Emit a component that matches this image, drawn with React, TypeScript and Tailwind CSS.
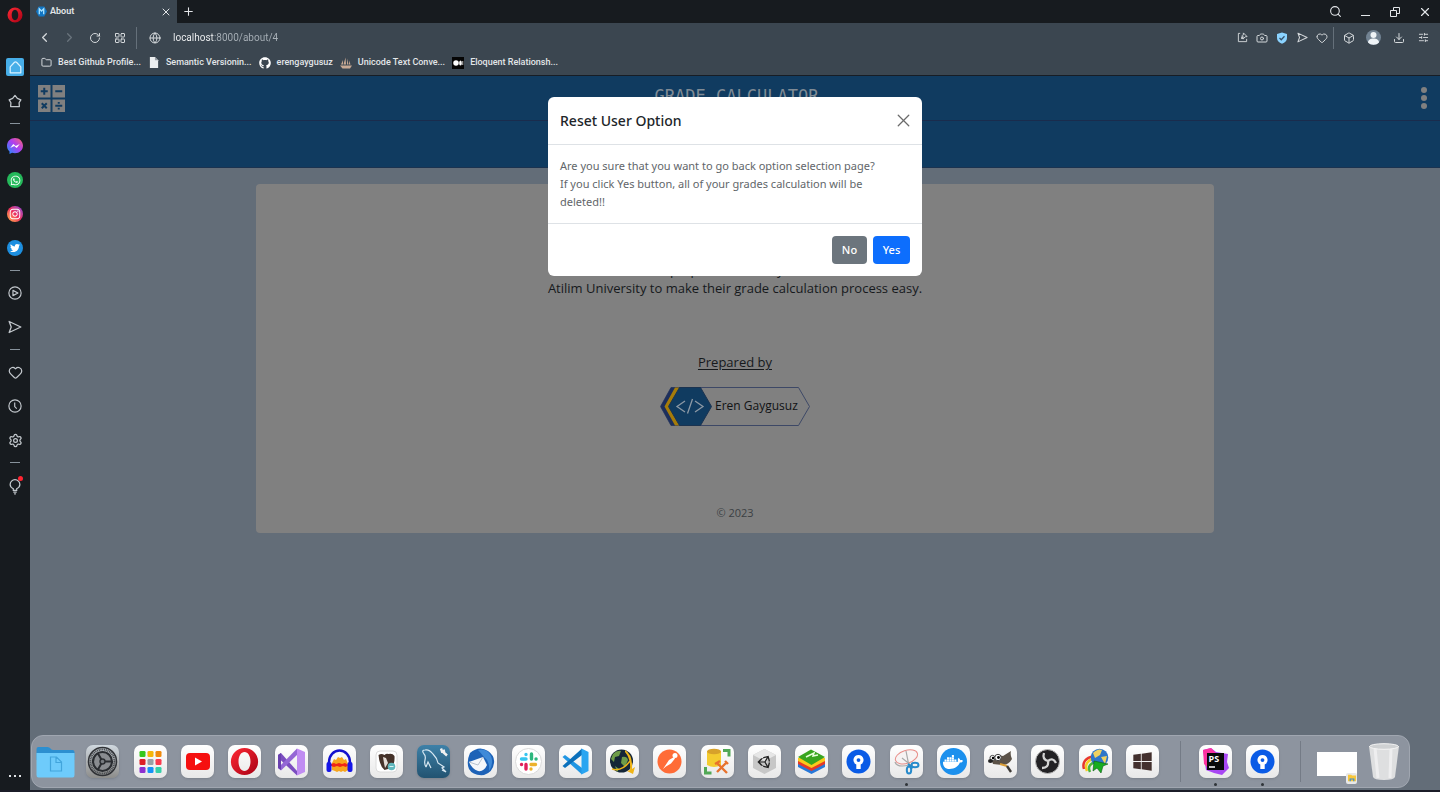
import React from "react";
import {
  Box, Camera, ChevronLeft, ChevronRight, Download, Folder, Globe, Heart,
  LayoutGrid, Plus, RotateCw, Search, Settings, SlidersHorizontal, X,
} from "lucide-react";
import {
  FaDocker, FaGithub, FaInstagram, FaTwitter, FaUnity, FaWhatsapp, FaWindows,
} from "react-icons/fa";

type Kids = { children?: React.ReactNode };

function SideItem({ label, children }: Kids & { label: string }) {
  return (
    <button aria-label={label} className="flex h-[34px] w-full items-center justify-center text-[#c3c8cd]">
      {children}
    </button>
  );
}

function SideDash() {
  return (
    <div className="flex h-[11px] items-center">
      <span className="h-px w-[10px] bg-[#87929b]" />
    </div>
  );
}

function OperaRing({ className }: { className: string }) {
  return (
    <svg viewBox="0 0 32 32" className={className} aria-hidden="true">
      <defs>
        <linearGradient id="ring" x1="0" x2="1" y1="0" y2="1">
          <stop offset="0" stopColor="#ff2a35" />
          <stop offset="1" stopColor="#a70014" />
        </linearGradient>
      </defs>
      <path fill="url(#ring)" fillRule="evenodd" d="M16 1a15 15 0 1 0 0 30a15 15 0 0 0 0-30Zm0 4.500c4 0 6.600 4.700 6.600 10.500S20 26.500 16 26.500S9.400 21.800 9.400 16S12 5.500 16 5.500Z" />
    </svg>
  );
}

function SendOutline({ className }: { className: string }) {
  return (
    <svg viewBox="0 0 24 24" className={className} fill="none" stroke="currentColor" strokeWidth="2.200" strokeLinejoin="round" aria-hidden="true">
      <path d="M2 2.500 22 12 2 21.500 5.500 12Z" />
    </svg>
  );
}

function Sidebar() {
  return (
    <nav aria-label="Browser sidebar" className="flex w-[30px] shrink-0 flex-col items-center bg-[#171b1f]">
      <div className="flex h-[50px] items-start pt-[7px]">
        <OperaRing className="size-4" />
      </div>
      <SideItem label="Home">
        <span className="flex size-[18px] items-center justify-center rounded-xs bg-[#47aee8]">
          <svg viewBox="0 0 24 24" className="size-[15px]" fill="none" stroke="#d9f2ff" strokeWidth="2" strokeLinejoin="round">
            <path d="M3.500 11 10 4q2-1.800 4 0l6.500 7v9.500h-17Z" />
          </svg>
        </span>
      </SideItem>
      <SideItem label="Pinboards">
        <svg viewBox="0 0 24 24" className="size-[14px]" fill="none" stroke="currentColor" strokeWidth="2.200" strokeLinejoin="round">
          <path d="m12 2.500 4 5 6 2.500-3 5 .5 6.500H4.500L5 15l-3-5 6-2.500Z" />
        </svg>
      </SideItem>
      <SideDash />
      <SideItem label="Messenger">
        <svg viewBox="0 0 32 32" className="size-4">
          <defs>
            <linearGradient id="msg" x1="1" x2="0" y1="0" y2="1">
              <stop offset="0" stopColor="#ff6a66" />
              <stop offset=".45" stopColor="#b13df0" />
              <stop offset="1" stopColor="#1296ff" />
            </linearGradient>
          </defs>
          <path fill="url(#msg)" d="M16 0C7 0 0 6.500 0 15.500c0 4.500 1.800 8.500 5 11.300V32l5-2.300c2 .6 4 .8 6 .8 9 0 16-6.500 16-15S25 0 16 0Z" />
          <path d="m6.500 20 6-8 5 4.200 8-4.200-6 8-5-4.200Z" fill="#fff" />
        </svg>
      </SideItem>
      <SideItem label="WhatsApp">
        <span className="flex size-4 items-center justify-center rounded-full bg-[#25b95b]">
          <FaWhatsapp className="size-[11px] text-white" />
        </span>
      </SideItem>
      <SideItem label="Instagram">
        <span className="flex size-4 items-center justify-center rounded-full bg-linear-to-tr from-[#ffb13b] via-[#ee2a5d] to-[#8a35e0]">
          <FaInstagram className="size-[12px] text-white" />
        </span>
      </SideItem>
      <SideItem label="Twitter">
        <span className="flex size-4 items-center justify-center rounded-full bg-[#1d8fe0]">
          <FaTwitter className="size-[10px] text-white" />
        </span>
      </SideItem>
      <SideDash />
      <SideItem label="Player">
        <svg viewBox="0 0 24 24" className="size-[14px]" fill="none" stroke="currentColor" strokeWidth="2" strokeLinejoin="round">
          <circle cx="12" cy="12" r="10.500" />
          <path d="M8.500 7.500 17 12l-8.500 4.500Z" />
        </svg>
      </SideItem>
      <SideItem label="My Flow">
        <SendOutline className="size-[14px]" />
      </SideItem>
      <SideDash />
      <SideItem label="Bookmarks"><Heart className="size-[15px]" strokeWidth={2} /></SideItem>
      <SideItem label="History">
        <svg viewBox="0 0 24 24" className="size-[14px]" fill="none" stroke="currentColor" strokeWidth="2">
          <circle cx="12" cy="12" r="10.500" />
          <path d="M11.500 6v7l3.500 3.500" />
        </svg>
      </SideItem>
      <SideItem label="Settings"><Settings className="size-[15px]" strokeWidth={2} /></SideItem>
      <SideDash />
      <SideItem label="Tips">
        <span className="relative pt-[3px]">
          <svg viewBox="0 0 24 28" className="h-4 w-[14px]" fill="none" stroke="currentColor" strokeWidth="2.200">
            <path d="M9 20v-3C5.500 15.500 3.500 13 3.500 9.800a8.500 8.500 0 0 1 17 0c0 3.200-2 5.700-5.500 7.200v3Z" />
            <path d="M9 23h6M10.500 26h3" />
          </svg>
          <span className="absolute top-0 -right-px size-[5px] rounded-full bg-[#ff2431]" />
        </span>
      </SideItem>
      <button aria-label="Sidebar setup" className="mt-auto mb-[12px] flex gap-[3px] py-px">
        <i className="size-[2px] bg-[#dfe2e5]" />
        <i className="size-[2px] bg-[#dfe2e5]" />
        <i className="size-[2px] bg-[#dfe2e5]" />
      </button>
    </nav>
  );
}

function TabStrip() {
  return (
    <div className="flex h-[23px] items-center bg-[#171b1f] text-[#e3e6e9]">
      <div className="flex h-full w-[147px] items-center bg-[#3b4650] pr-[5px] pl-[6px]">
        <svg viewBox="0 0 20 20" className="size-[11px]" aria-hidden="true">
          <path d="M5 1h10l5 9-5 9H5L0 10Z" fill="#1276c4" />
          <path d="M6 15V5l4 4 4-4v10" stroke="#a8e2ff" strokeWidth="2.400" fill="none" />
        </svg>
        <span className="ml-[3px] font-['Roboto',sans-serif] text-[9px] font-semibold">About</span>
        <button aria-label="Close tab" className="ml-auto"><X className="size-[12px]" /></button>
      </div>
      <button aria-label="New tab" className="ml-[5px]"><Plus className="size-[13px]" strokeWidth={2} /></button>
      <div className="ml-auto flex items-center">
        <button aria-label="Search tabs" className="flex w-[30px] justify-center"><Search className="size-[13px]" /></button>
        <button aria-label="Minimize" className="flex w-[30px] justify-center pt-[8px]"><span className="h-px w-[9px] bg-current" /></button>
        <button aria-label="Restore" className="flex w-[30px] justify-center">
          <svg viewBox="0 0 10 10" className="size-[10px]" fill="none" stroke="currentColor"><path d="M.5 3.500h6v6h-6ZM3.500 3.500v-3h6v6h-3" /></svg>
        </button>
        <button aria-label="Close window" className="flex w-[30px] justify-center"><X className="size-[14px]" /></button>
      </div>
    </div>
  );
}

function Tool({ label, wide, children }: Kids & { label: string; wide?: boolean }) {
  return (
    <button aria-label={label} className={wide ? "flex w-[25px] justify-center" : "flex w-[20px] justify-center"}>
      {children}
    </button>
  );
}

function Toolbar() {
  return (
    <div className="flex h-[28px] items-center bg-[#3b4650] pt-px pr-[4px] pl-[2px] text-[#d5d9dc]">
      <Tool label="Back" wide><ChevronLeft className="size-[15px]" /></Tool>
      <Tool label="Forward" wide><ChevronRight className="size-[15px] text-[#6a747d]" /></Tool>
      <Tool label="Reload" wide><RotateCw className="size-[12px]" /></Tool>
      <Tool label="Speed dial" wide><LayoutGrid className="size-[12px]" /></Tool>
      <span className="ml-[4px] h-[22px] w-px bg-[#65707a]" />
      <Globe className="ml-[12px] size-[12px]" />
      <input
        aria-label="Address"
        defaultValue="localhost:8000/about/4"
        className="ml-[12px] min-w-0 flex-1 bg-[linear-gradient(to_right,#f5f6f7_41px,#a9b1b8_41px)] bg-clip-text font-['Roboto',sans-serif] text-[10px] text-transparent outline-none"
      />
      <Tool label="Easy share">
        <svg viewBox="0 0 24 24" className="size-[11px]" fill="none" stroke="currentColor" strokeWidth="2"><path d="M7 3H3v18h18v-6M9 15l4-4M11 8l5 5M14 2l8 8-4 .5-5 5L9.500 11l4-4Z" /></svg>
      </Tool>
      <Tool label="Snapshot"><Camera className="size-[12px]" /></Tool>
      <Tool label="Protection">
        <svg viewBox="0 0 24 24" className="size-[12px]"><path d="m12 1 10 3v8c0 6-4 9-10 11.500C6 21 2 18 2 12V4Z" fill="#8bd3ff" /><path d="m7 12 3.500 3.500L17 8.500" fill="none" stroke="#35516a" strokeWidth="2.500" /></svg>
      </Tool>
      <Tool label="Send to flow"><SendOutline className="size-[11px]" /></Tool>
      <Tool label="Favorite"><Heart className="size-[12px]" /></Tool>
      <span className="mr-[2px] ml-px h-[22px] w-px bg-[#65707a]" />
      <Tool label="Extensions" wide><Box className="size-[12px]" /></Tool>
      <Tool label="Profile" wide>
        <svg viewBox="0 0 30 30" className="size-[15px]"><circle cx="15" cy="15" r="15" fill="#718292" /><circle cx="15" cy="10" r="6" fill="#eef3f7" /><path d="M4 25c0-5 5-8 11-8s11 3 11 8c-6 6-16 6-22 0Z" fill="#eef3f7" /></svg>
      </Tool>
      <Tool label="Downloads" wide><Download className="size-[12px]" /></Tool>
      <Tool label="Easy setup" wide><SlidersHorizontal className="size-[11px]" /></Tool>
    </div>
  );
}

function Bookmark({ text, children }: Kids & { text: string }) {
  return (
    <a href="#" className="flex items-center gap-[6px]">
      <span className="flex w-[12px] justify-center">{children}</span>
      {text}
    </a>
  );
}

function BookmarksBar() {
  return (
    <div className="flex h-[25px] items-center gap-[7px] border-b border-[#171d25] bg-[#3b4650] pb-px pl-[10px] font-['Roboto',sans-serif] text-[9px] font-medium whitespace-nowrap text-[#e3e6e9]">
      <Bookmark text="Best Github Profile..."><Folder className="size-[11px]" /></Bookmark>
      <Bookmark text="Semantic Versionin...">
        <svg viewBox="0 0 20 24" className="h-[11px] w-[10px]"><path d="M1 0h11l7 7v17H1Z" fill="#eceef0" /><path d="M12 0v7h7" fill="#9ba2a9" /></svg>
      </Bookmark>
      <Bookmark text="erengaygusuz"><FaGithub className="size-[12px] text-white" /></Bookmark>
      <Bookmark text="Unicode Text Conve...">
        <svg viewBox="0 0 24 24" className="size-[12px]"><path d="M11 1 7 15h5ZM6 6 2 15h4ZM14 3v12h3ZM18 7v8h3ZM0 17h24l-4 6H5Z" fill="#c7a994" /></svg>
      </Bookmark>
      <Bookmark text="Eloquent Relationsh...">
        <svg viewBox="0 0 24 24" className="size-[12px]"><path fill="#050505" d="M0 0h24v24H0Z" /><circle cx="8" cy="12" r="5.500" fill="#fff" /><ellipse cx="17" cy="12" rx="2.700" ry="5" fill="#fff" /><path d="M21.500 8v8" stroke="#fff" strokeWidth="1.500" /></svg>
      </Bookmark>
    </div>
  );
}

function SiteHeader() {
  return (
    <header className="border-b border-[#1b3350] bg-[#103b60]">
      <div className="flex h-[45px] items-center border-b border-[#1a2c4d] pr-[13px] pl-[8px]">
        <svg viewBox="0 0 27 27" className="size-[27px]" role="img" aria-label="Calculator">
          <path d="M0 0h12.500v12.500H0ZM14.500 0H27v12.500H14.500ZM0 14.500h12.500V27H0ZM14.500 14.500H27V27H14.500Z" fill="#808080" />
          <path d="M6.250 2.750v7M2.750 6.250h7M17.250 6.250h7M3.750 18.250l5 5M8.750 18.250l-5 5M17.250 20.750h7M20.750 17v1.800M20.750 22.700v1.800" stroke="#103b60" strokeWidth="2" fill="none" />
        </svg>
        <h1 className="flex-1 pr-[13px] pb-[4px] text-center font-['DejaVu_Sans_Mono',monospace] text-[17px] leading-6 text-[#808b95]">GRADE CALCULATOR</h1>
        <button aria-label="Menu" className="flex flex-col gap-[2px]">
          <span className="size-[6px] rounded-full bg-[#808080]" />
          <span className="size-[6px] rounded-full bg-[#808080]" />
          <span className="size-[6px] rounded-full bg-[#808080]" />
        </button>
      </div>
      <div className="h-[46px]" />
    </header>
  );
}

function AuthorBadge() {
  return (
    <a href="#" className="relative mt-[15px] flex h-[39px] w-[150px] items-center pl-[55px] text-[12px] font-normal text-[#111315]">
      <svg viewBox="0 0 150 39" className="absolute inset-0 size-full" aria-hidden="true">
        <path d="M11 .5h127.500L149.500 19.500 138.500 38.500H11L.5 19.500Z" fill="none" stroke="#3d4866" />
        <path d="M11 .5h8L8 19.500l11 19h-8L.5 19.500Z" fill="#1d2f5c" />
        <path d="M15 .5h5L9 19.500l11 19h-5L4.500 19.500Z" fill="#a57c0a" />
        <path d="M19.500.5h21l11 19-11 19h-21l-11-19Z" fill="#103b60" stroke="#1b3350" />
        <path d="m25 14-8 5.500 8 5.500M35 14l8 5.500-8 5.500M32.500 12l-5 14.500" fill="none" stroke="#8d99a5" strokeWidth="1.300" />
      </svg>
      <span className="relative pb-[2px]">Eren Gaygusuz</span>
    </a>
  );
}

function AboutCard() {
  return (
    <main className="mx-auto mt-[16px] flex h-[349px] w-[68%] flex-col items-center rounded bg-[#808080] pt-[77px] text-[13px] font-medium text-[#16191c]">
      <p className="text-center leading-[18px]">
        This website is prepared for every student who is at
        <br />
        Atilim University to make their grade calculation process easy.
      </p>
      <h2 className="mt-[55px] leading-[20px] underline underline-offset-2">Prepared by</h2>
      <AuthorBadge />
      <footer className="mt-auto mb-[11px] text-[11px] leading-[18px] font-normal text-[#3c4044]">© 2023</footer>
    </main>
  );
}

function ResetDialog() {
  return (
    <div className="absolute inset-x-0 top-[21px] flex justify-center">
      <section role="dialog" aria-labelledby="reset-title" className="w-[374px] rounded-md bg-white font-['Noto_Sans',sans-serif]">
        <div className="flex h-[48px] items-center justify-between border-b border-[#dee2e6] px-[12px]">
          <h2 id="reset-title" className="text-[14px] font-medium text-[#212529]">Reset User Option</h2>
          <button aria-label="Close" className="text-[#6b6b6b]"><X className="-mr-[4px] size-[21px]" strokeWidth={1.500} /></button>
        </div>
        <p className="border-b border-[#dee2e6] px-[12px] py-[12px] text-[11px] leading-[18px] text-[#62666a]">
          Are you sure that you want to go back option selection page?
          <br />
          If you click Yes button, all of your grades calculation will be deleted!!
        </p>
        <div className="flex justify-end gap-[6px] p-[12px] text-[11px] font-medium text-white">
          <button className="h-[28px] w-[35px] rounded bg-[#6c757d]">No</button>
          <button className="h-[28px] w-[37px] rounded bg-[#0d6efd]">Yes</button>
        </div>
      </section>
    </div>
  );
}

function App33({ name, running, tone, children }: Kids & { name: string; running?: boolean; tone?: string }) {
  return (
    <button
      aria-label={name}
      className={`relative flex size-[33px] shrink-0 items-center justify-center rounded-[7px] shadow-sm ${tone ?? "bg-linear-to-b from-white to-[#e8e8e8]"}`}
    >
      {children}
      {running && <span className="absolute -bottom-[8px] left-[15px] size-[3px] rounded-full bg-[#2f3439]" />}
    </button>
  );
}

function Art({ children }: Kids) {
  return <svg viewBox="0 0 33 33" className="size-[33px]" aria-hidden="true">{children}</svg>;
}

function SourceTree() {
  return (
    <Art>
      <circle cx="16.500" cy="16.500" r="12" fill="#0a5be6" />
      <path d="M16.500 10a5 5 0 0 0-2.200 9.500V24h4.400v-4.500A5 5 0 0 0 16.500 10Zm0 3.200a1.900 1.900 0 1 1 0 3.800 1.900 1.900 0 0 1 0-3.800Z" fill="#fff" fillRule="evenodd" />
    </Art>
  );
}

const launchTiles = ["#36c71c", "#f5b60b", "#f08a0c", "#dd1f26", "#9aa0a6", "#fb3b4e", "#8c2fd0", "#1692f6", "#36cfa8"];

function Dock() {
  return (
    <div className="absolute right-[30px] bottom-[2px] left-px flex h-[53px] items-center rounded-[12px] border border-[#a0a6b0] bg-[#8d949f] pr-[10px] pl-[7px]">
      <div className="flex flex-1 justify-between">
        <button aria-label="Files" className="flex size-[33px] items-center justify-center">
          <svg viewBox="0 0 38 33" className="h-[33px] w-[39px] shrink-0">
            <path d="M0 4q0-2 2-2h9q2 0 3 1.500T17 5h19q2 0 2 2v8H0Z" fill="#2c8fd0" />
            <path d="M0 8h38v22q0 2.500-2 2.500H2q-2 0-2-2.500Z" fill="#6ecbfb" />
            <path d="M14 12h6l5 5v9H14ZM19.500 12v5.500H25" fill="none" stroke="#42a5dc" strokeWidth="1.200" />
          </svg>
        </button>
        <App33 name="System settings" tone="bg-linear-to-b from-[#d0d8df] to-[#8d8d8b]">
          <Art>
            <circle cx="16.500" cy="16.500" r="14" fill="none" stroke="#303236" strokeWidth="1.500" />
            <circle cx="16.500" cy="16.500" r="12" fill="none" stroke="#4b4e52" strokeWidth="2" strokeDasharray="1.200 .6" />
            <circle cx="16.500" cy="16.500" r="9.500" fill="#898c90" stroke="#2a2d31" strokeWidth="2.200" />
            <path d="M16.500 16.500 12 8.500M16.500 16.500h9.500M16.500 16.500 12 24.500" stroke="#2a2d31" strokeWidth="2" />
            <circle cx="16.500" cy="16.500" r="2.500" fill="#777b80" stroke="#2a2d31" strokeWidth="1.400" />
          </Art>
        </App33>
        <App33 name="Launchpad">
          <Art>{launchTiles.map((c, i) => <rect key={c} x={5.5 + (i % 3) * 8} y={6 + Math.floor(i / 3) * 8} width="6" height="6" rx="1.300" fill={c} />)}</Art>
        </App33>
        <App33 name="YouTube">
          <Art><rect x="5" y="8" width="24" height="17" rx="4" fill="#f50f0f" /><path d="m14 12.500 7 4-7 4Z" fill="#fff" /></Art>
        </App33>
        <App33 name="Opera"><OperaRing className="size-[29px]" /></App33>
        <App33 name="Visual Studio">
          <Art>
            <path d="m22 3.500 8 3.500v20l-8 3.500Z" fill="#c08cf2" />
            <path d="M3 10 6 8l16 18v4.500L4 13.500Z" fill="#7b4dc0" />
            <path d="M3 23 22 3.500V10L6 25.500Z" fill="#9467d5" />
            <path d="M3 10v13l3 2V8Z" fill="#6840ae" />
          </Art>
        </App33>
        <App33 name="Audacity">
          <Art>
            <path d="m9 18 2-4 2 1 2-3 2 1 2-1 2 3 2-1 2 5v6l-3 2-2-1-2 1-2-1-2 1-2-1-3-1Z" fill="#f7a51d" />
            <path d="m8 19 3-1 2 1 3-1 3 1 3-1 3 2-2 2-3-1-3 1-3-1-3 1-3-1Z" fill="#f02517" />
            <path d="M6 20v-3a10.500 11.500 0 0 1 21 0v3" fill="none" stroke="#1310ce" strokeWidth="2.400" />
            <rect x="3.500" y="17" width="5" height="10" rx="2" fill="#1515e8" /><rect x="24.500" y="17" width="5" height="10" rx="2" fill="#1515e8" />
          </Art>
        </App33>
        <App33 name="DBeaver">
          <Art>
            <rect x="6" y="6" width="21" height="21" rx="4" fill="#fff" stroke="#dcdcdc" />
            <path d="M8.500 10q3-2 6 0 2-2 4-1 4-1 6 2 .5 8-3 12l-7 2q-5-4-6-15Z" fill="#453229" /><path d="m13 12 3 1 2 5-3 5-1-5Z" fill="#e4dcd5" />
            <circle cx="21.500" cy="21.500" r="3.800" fill="#60b7bd" /><path d="M19.500 21.500h4" stroke="#d9f3f4" />
          </Art>
        </App33>
        <App33 name="MySQL Workbench" tone="bg-linear-to-b from-[#3e81a8] to-[#225371]">
          <Art>
            <path d="M9 22q-2-3-1-7t-1-6q-3-4 1-4 4-1 8 4 4 4 5 9l6 4-2 1 4 4-4-2M9 22l2-5 3 6" fill="none" stroke="#d8e8f2" strokeWidth="1.200" />
            <path d="m24 3.500 1 3 3-1M25 6l5 4.500" fill="none" stroke="#f0f0f0" strokeWidth="2.400" />
          </Art>
        </App33>
        <App33 name="Thunderbird">
          <Art>
            <path d="M6 8Q15 0 24 6q7 5 6 12-1 9-10 12Q9 31 5 24 2 17 6 8Z" fill="#1d62b7" />
            <path d="M14 5q9-2 13 6 3 8-2 15 1-10-5-14-3-4-6-7Z" fill="#3f8ad8" />
            <path d="m5 17 14-5 4 8q-3 7-9 6-6-2-9-9Z" fill="#f5f7fa" /><path d="m5 17 9 3 5-8" fill="none" stroke="#b8c2ce" />
          </Art>
        </App33>
        <App33 name="Slack">
          <Art>
            <circle cx="16.500" cy="16.500" r="13" fill="#fff" stroke="#dadada" />
            <g strokeWidth="3.400" strokeLinecap="round">
              <path d="M14 9.500v.1M9.500 14H14" stroke="#36c5f0" /><path d="M19.500 9v5M24 14h.1" stroke="#2eb67d" />
              <path d="M19 24v.1M19 19.500h4.500" stroke="#ecb22e" /><path d="M9.500 19.500h.1M14 19.500v4.500" stroke="#e01e5a" />
            </g>
          </Art>
        </App33>
        <App33 name="Visual Studio Code">
          <Art>
            <path d="M3.500 12 6 10l17 13v6.500Z" fill="#2196e3" /><path d="M3.500 21 23 3.500V10L6 23Z" fill="#0b70bb" />
            <path d="m22.500 3.500 7 3.500v19l-7 3.500Z" fill="#2aa5f1" />
          </Art>
        </App33>
        <App33 name="Internet browser">
          <Art>
            <circle cx="15.500" cy="16" r="11.500" fill="#152637" /><path d="M7 9q4-4 8-3l-2 5-4 1-1 5-3-3ZM16 12q5-1 6 3l-3 7-4-4ZM9 21l4 3-2 3Z" fill="#6e9c49" />
            <path d="M19 5q8 5 7 19l3-2-2 7-6-3 3-1q1-11-5-18Z" fill="#f0b415" /><path d="M6 24q10 3 18-8" fill="none" stroke="#eeb31a" strokeWidth="1.500" />
          </Art>
        </App33>
        <App33 name="Postman">
          <Art>
            <circle cx="16.500" cy="16.500" r="12" fill="#ff6c37" />
            <path d="m10 24 6-9 5-3 1 1.500-4 5-5 3Z" fill="#fff" /><circle cx="22" cy="10.500" r="2.500" fill="#fff" />
          </Art>
        </App33>
        <App33 name="Database tools">
          <Art>
            <path d="M22 5.500h6v6M4.500 22v6h6" fill="none" stroke="#51a856" strokeWidth="3" />
            <path d="M6 6v14q7 4 14 0V6Z" fill="#f4cc30" /><ellipse cx="13" cy="6.500" rx="7" ry="2.800" fill="#d7a22b" />
            <path d="m16 27 9-9M16 18l10 10M14 19l5-3M24 16l3 3" stroke="#e8722c" strokeWidth="2.400" />
          </Art>
        </App33>
        <App33 name="Unity">
          <Art><path d="M16.500 4 28 10v13l-11.500 6L5 23V10Z" fill="#c7c7c7" /><path d="M5 10 16.500 4 28 10l-11.500 6Z" fill="#e6e6e6" /><g transform="translate(9 9.500)"><FaUnity size={15} color="#222" /></g></Art>
        </App33>
        <App33 name="BlueStacks">
          <Art>
            <path d="m3 22 13.500 7L30 22v-3H3Z" fill="#2878d8" /><path d="m3 19 13.500 7L30 19v-3H3Z" fill="#e53a28" />
            <path d="m3 16 13.500 7L30 16v-3H3Z" fill="#fbca1b" /><path d="m3 12 13-7.500L30 12l-13.500 8Z" fill="#39a51f" /><path d="m11 12 8-4-1 3 5-1" fill="none" stroke="#e7ffda" strokeWidth="1.500" />
          </Art>
        </App33>
        <App33 name="Sourcetree"><SourceTree /></App33>
        <App33 name="Snipping Tool" running>
          <Art>
            <ellipse cx="16.500" cy="12" rx="11.500" ry="6.500" fill="#f7f3f3" stroke="#e88d88" transform="rotate(-18 16 12)" />
            <path d="M5 17q2 6 14 3M16 6l3 15M12 13l10 8" fill="none" stroke="#a9a9a9" strokeWidth="1.200" />
            <g fill="none" stroke="#278acb" strokeWidth="2"><ellipse cx="19" cy="25" rx="2.200" ry="3.500" /><ellipse cx="25" cy="20" rx="3.500" ry="2.200" /><path d="m18 19 5 4" /></g>
          </Art>
        </App33>
        <App33 name="Docker">
          <span className="flex size-[27px] items-center justify-center rounded-full bg-[#1c90ed]"><FaDocker className="size-[20px] text-white" /></span>
        </App33>
        <App33 name="GIMP">
          <Art>
            <path d="m7 13 7-3 5 1 8-5q-1 4 1 8-3 6-10 6l-9-1Z" fill="#5b5248" />
            <circle cx="8.500" cy="13" r="2.600" fill="#fff" stroke="#444" /><circle cx="14" cy="12.500" r="3.200" fill="#fff" stroke="#444" /><circle cx="9" cy="13" r="1.200" /><circle cx="14.500" cy="12.500" r="1.400" /><ellipse cx="6.500" cy="16" rx="2.500" ry="2" fill="#222" />
            <path d="m16 19 7 2" stroke="#d89c36" strokeWidth="2" /><path d="m23 21 4 6" stroke="#3c3935" strokeWidth="2.400" />
          </Art>
        </App33>
        <App33 name="OBS Studio">
          <Art>
            <circle cx="16.500" cy="16.500" r="12" fill="#222124" stroke="#bdbdbd" />
            <g fill="none" stroke="#d3d3d3" strokeWidth="2.300"><path d="M13 8q-2 6 4 8" /><path d="M17 16q5-4 8 2" /><path d="M17 16q1 7-6 7" /></g>
          </Art>
        </App33>
        <App33 name="Download Manager">
          <Art>
            <g fill="none" strokeWidth="2.500"><path d="M5 24Q2 14 15 11" stroke="#e8362c" /><path d="M8 26Q4 16 17 13" stroke="#f6cd21" /><path d="M11 27Q7 19 19 16" stroke="#4cb53a" /></g>
            <circle cx="20.500" cy="12.500" r="8.800" fill="#2e76c8" /><path d="M14 8q5-5 9-3l-2 5-5 3ZM22 12l6-1-2 8Z" fill="#f0d261" />
            <path d="m15 16 14 3-5 2-2 7-4-5-4 3Z" fill="#18ad20" stroke="#0b5d12" strokeWidth=".6" />
          </Art>
        </App33>
        <App33 name="Start"><FaWindows className="size-[21px] text-[#43302e]" /></App33>
      </div>
      <span className="ml-[21px] h-[41px] w-px bg-[#747b86]" />
      <div className="ml-[18px] flex gap-[14px]">
        <App33 name="PhpStorm" running>
          <Art>
            <path d="m4 5 8-2 5 4 12 2-1 8 2 6-7 7-8-2-8-3Z" fill="#a847f3" /><path d="m4 5 8-2 5 5-9 14-3-3Z" fill="#fb32a1" />
            <path d="M8 8h17v17H8Z" fill="#090909" /><path d="M10 22h6" stroke="#fff" strokeWidth="1.500" />
            <text x="9.500" y="17" fill="#fff" fontSize="9" fontWeight="700">PS</text>
          </Art>
        </App33>
        <App33 name="Sourcetree window" running><SourceTree /></App33>
      </div>
      <span className="ml-[21px] h-[41px] w-px bg-[#747b86]" />
      <button aria-label="Explorer window" className="relative mt-[4px] ml-[16px] h-[24px] w-[40px] bg-white">
        <span className="absolute right-0 -bottom-[8px] flex size-[11px] items-center justify-center rounded-xs bg-[#e8e8e8]">
          <svg viewBox="0 0 10 10" className="size-[8px]"><path d="M0 1h4l1 1h5v7H0Z" fill="#f8c73b" /><path d="M2 9V5.500h6V9H6.500V7h-3v2Z" fill="#3b8ed4" /></svg>
        </span>
      </button>
      <button aria-label="Recycle bin" className="ml-[12px]">
        <svg viewBox="0 0 30 38" className="h-[38px] w-[30px]">
          <path d="m0 3 4 31q1 3 11 3t11-3l4-31Z" fill="#dedfe0" /><path d="m6 5 3 30M22 5l-1 30" stroke="#eeeeef" strokeWidth="3" /><ellipse cx="15" cy="3.500" rx="14.500" ry="2.800" fill="#cfd1d3" stroke="#f5f5f5" />
        </svg>
      </button>
    </div>
  );
}

export default function App() {
  return (
    <div className="flex min-h-screen border-b-2 border-[#1b1c28] bg-[#171b1f] font-['Open_Sans','Noto_Sans',sans-serif]">
      <Sidebar />
      <div className="flex min-w-0 flex-1 flex-col">
        <TabStrip />
        <Toolbar />
        <BookmarksBar />
        <div className="relative flex-1 bg-[#636d78]">
          <SiteHeader />
          <AboutCard />
          <ResetDialog />
          <Dock />
        </div>
      </div>
    </div>
  );
}
